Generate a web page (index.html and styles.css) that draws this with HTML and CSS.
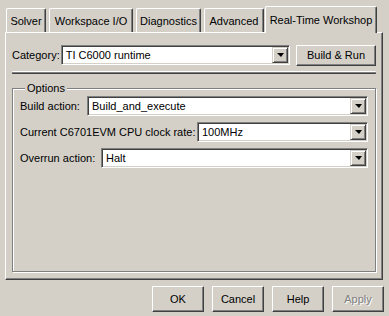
FILE: index.html
```html
<!DOCTYPE html>
<html lang="en">
<head>
    <meta charset="UTF-8">
    <title>Simulation Parameters - Real-Time Workshop</title>
    <link rel="stylesheet" href="styles.css">
</head>
<body>

<div class="dialog">
    <!-- Tab strip -->
    <div class="tabs">
        <div class="tab tab-solver">Solver</div>
        <div class="tab tab-workspace">Workspace I/O</div>
        <div class="tab tab-diagnostics">Diagnostics</div>
        <div class="tab tab-advanced">Advanced</div>
        <div class="tab tab-rtw active">Real-Time Workshop</div>
    </div>

    <div class="panel">
        <div class="category-row">
            <span class="label label-category">Category:</span>
            <div class="combo combo-grow">
                <span class="combo-text">TI C6000 runtime</span>
                <span class="combo-arrow"></span>
            </div>
            <button class="btn btn-build">Build &amp; Run</button>
        </div>

        <div class="separator"></div>

        <fieldset class="group">
            <legend>Options</legend>
            <div class="field-row">
                <span class="label label-build">Build action:</span>
                <div class="combo combo-grow">
                    <span class="combo-text">Build_and_execute</span>
                    <span class="combo-arrow"></span>
                </div>
            </div>
            <div class="field-row">
                <span class="label label-clock">Current C6701EVM CPU clock rate:</span>
                <div class="combo combo-grow">
                    <span class="combo-text">100MHz</span>
                    <span class="combo-arrow"></span>
                </div>
            </div>
            <div class="field-row">
                <span class="label label-overrun">Overrun action:</span>
                <div class="combo combo-grow">
                    <span class="combo-text">Halt</span>
                    <span class="combo-arrow"></span>
                </div>
            </div>
        </fieldset>
    </div>

    <div class="footer">
        <button class="btn btn-footer">OK</button>
        <button class="btn btn-footer">Cancel</button>
        <button class="btn btn-footer">Help</button>
        <button class="btn btn-footer disabled">Apply</button>
    </div>
</div>

</body>
</html>
```

FILE: styles.css
```css
body {
    margin: 0;
    padding: 0;
    background-color: #D4D0C8;
    font-family: 'Liberation Sans', Arial, sans-serif;
    font-size: 11px;
    color: #000;
}

.dialog {
    width: 389px;
    height: 316px;
    overflow: hidden;
}

/* Tabs */
.tabs {
    display: flex;
    align-items: flex-end;
    height: 26px;
    margin-top: 6px;
    padding-left: 6px;
}

.tab {
    box-sizing: border-box;
    height: 24px;
    padding-top: 6px;
    line-height: 13px;
    text-align: center;
    white-space: nowrap;
    border-top: 1px solid #fff;
    border-left: 1px solid #fff;
    border-right: 1px solid #404040;
    box-shadow: inset -1px 0 0 #808080;
    border-radius: 2px 2px 0 0;
    margin-right: 3px;
}

.tab-solver { width: 40px; }
.tab-workspace { width: 84px; }
.tab-diagnostics { width: 65px; }
.tab-advanced { width: 60px; margin-right: 1px; }
.tab-rtw { width: 112px; }

.tab.active {
    height: 27px;
    padding-top: 7px;
    margin-bottom: -1px;
    background-color: #D4D0C8;
    position: relative;
    z-index: 1;
}

/* Main panel */
.panel {
    box-sizing: border-box;
    width: 378px;
    height: 248px;
    margin-left: 5px;
    padding: 12px 0 0 6px;
    border-top: 1px solid #fff;
    border-left: 1px solid #fff;
    border-right: 1px solid #404040;
    border-bottom: 1px solid #404040;
    box-shadow: inset -1px -1px 0 #808080;
}

.category-row {
    display: flex;
    align-items: center;
    width: 364px;
    height: 20px;
}

.label {
    white-space: nowrap;
    line-height: 13px;
}

.label-category { margin-right: 1px; }
.label-build { width: 67px; }
.label-clock { width: 177px; }
.label-overrun { width: 81px; }

/* Combo boxes */
.combo {
    box-sizing: border-box;
    display: flex;
    align-items: center;
    height: 20px;
    background-color: #fff;
    border-top: 1px solid #808080;
    border-left: 1px solid #808080;
    border-right: 1px solid #fff;
    border-bottom: 1px solid #fff;
    box-shadow: inset 1px 1px 0 #404040, inset -1px -1px 0 #D4D0C8;
    padding: 1px;
}

.combo-grow { flex: 1; }

.combo-text {
    flex: 1;
    padding-left: 3px;
    line-height: 13px;
    white-space: nowrap;
}

.combo-arrow {
    box-sizing: border-box;
    width: 16px;
    height: 16px;
    display: flex;
    align-items: center;
    justify-content: center;
    background-color: #D4D0C8;
    border-top: 1px solid #D4D0C8;
    border-left: 1px solid #D4D0C8;
    border-right: 1px solid #404040;
    border-bottom: 1px solid #404040;
    box-shadow: inset 1px 1px 0 #fff, inset -1px -1px 0 #808080;
}

.combo-arrow::after {
    content: "";
    width: 0;
    height: 0;
    border-left: 4px solid transparent;
    border-right: 3px solid transparent;
    border-top: 4px solid #000;
}

/* Buttons */
.btn {
    box-sizing: border-box;
    font-family: 'Liberation Sans', Arial, sans-serif;
    font-size: 11px;
    color: #000;
    background-color: #D4D0C8;
    border-top: 1px solid #fff;
    border-left: 1px solid #fff;
    border-right: 1px solid #404040;
    border-bottom: 1px solid #404040;
    box-shadow: inset -1px -1px 0 #808080;
    border-radius: 0;
    padding: 0;
    margin: 0;
}

.btn-build {
    width: 80px;
    height: 21px;
    margin-left: 6px;
}

.separator {
    width: 364px;
    height: 3px;
    margin-top: 6px;
    border-top: 1px solid #fff;
    background-color: #808080;
    border-bottom: 1px solid #404040;
    box-sizing: border-box;
    border-radius: 1px;
}

/* Group box */
.group {
    box-sizing: border-box;
    width: 364px;
    height: 190px;
    margin: 8px 0 0 0;
    padding: 1px 7px 0 7px;
    border: 1px solid #808080;
    box-shadow: inset 1px 1px 0 #fff, 1px 1px 0 #fff;
}

.group legend {
    padding: 0 2px;
    margin-left: 5px;
    line-height: 13px;
    background-color: #D4D0C8;
}

.field-row {
    display: flex;
    align-items: center;
    height: 20px;
    margin-bottom: 6px;
}

/* Footer */
.footer {
    display: flex;
    justify-content: flex-end;
    gap: 8px;
    margin-top: 6px;
    padding-right: 5px;
}

.btn-footer {
    width: 52px;
    height: 26px;
}

.btn-footer.disabled {
    color: #808080;
    text-shadow: 1px 1px 0 #fff;
}
```
